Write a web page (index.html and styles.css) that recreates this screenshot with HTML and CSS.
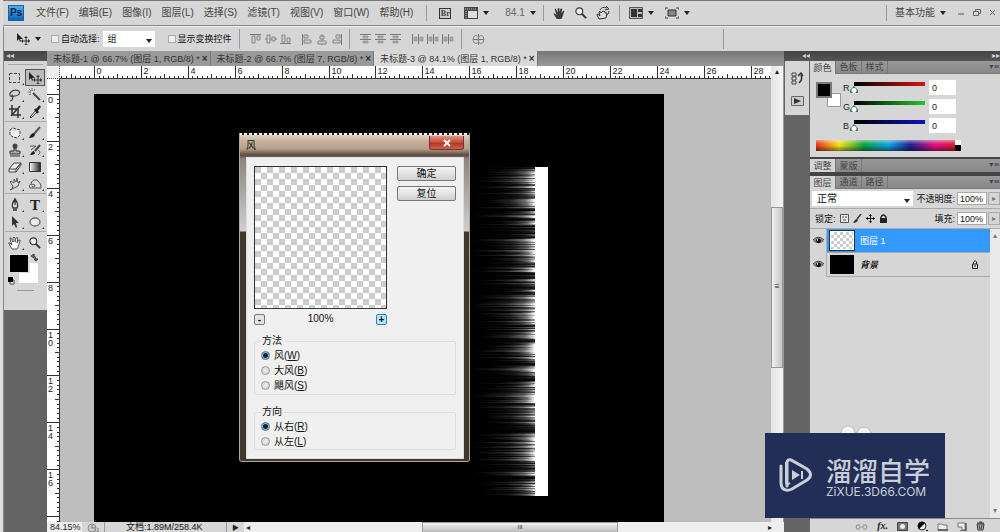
FILE: index.html
```html
<!DOCTYPE html>
<html lang="zh-CN">
<head>
<meta charset="utf-8">
<title>未标题-3</title>
<link rel="stylesheet" href="styles.css">
</head>
<body>
<svg class="defs" width="0" height="0" aria-hidden="true">
  <defs>
    <linearGradient id="fade"><stop offset="0" stop-color="#fff" stop-opacity="0"/><stop offset=".5" stop-color="#fff" stop-opacity=".14"/><stop offset=".8" stop-color="#fff" stop-opacity=".45"/><stop offset="1" stop-color="#fff" stop-opacity="1"/></linearGradient>
    <linearGradient id="grad"><stop offset="0" stop-color="#fff"/><stop offset="1" stop-color="#222"/></linearGradient>
    <symbol id="move" viewBox="0 0 14 12"><path d="M1 0v8l2-2 1 3 1-1-1-2h3z" fill="#222"/><path d="M10 4v8M6 8h8" stroke="#333" stroke-width="1"/><path d="M10 3l-2 2h4zM10 12l-2-1h4zM5 8l2-2v4zM14 8l-2-2v4z" fill="#333"/></symbol>
    <symbol id="hand" viewBox="0 0 14 14"><path d="M4 13L1 8q-1-2 1-1l2 2L2 3q0-2 1-1l2 4V2q1-2 2 0v4l1-4q1-1 2 0L9 7l2-3q2 0 1 1l-2 6-1 2z"/></symbol>
    <symbol id="lens" viewBox="0 0 14 14"><circle cx="5" cy="5" r="4" fill="#eee" stroke="#333" stroke-width="1.3"/><path d="M8 8l5 5" stroke="#333" stroke-width="2.2"/></symbol>
    <symbol id="eye" viewBox="0 0 12 9"><path d="M0 5Q6-1 12 5 6 10 0 5" fill="#777"/><path d="M0 4Q6-2 12 4" fill="none" stroke="#222"/><circle cx="6" cy="5" r="2.6" fill="#111"/><circle cx="5" cy="4" r=".8" fill="#fff"/></symbol>
    <symbol id="lock" viewBox="0 0 9 10"><path d="M2 5V3q2-4 5 0v2" fill="none" stroke="#222" stroke-width="1.3"/><path d="M1 4h7v5H1z" fill="#222"/></symbol>
    <symbol id="dist" viewBox="0 0 12 10"><path d="M0 .5h11M0 5.500h11" stroke="#777"/><path d="M3 2h5v2H3zM3 7h5v2H3z" fill="#aaa" stroke="#888" stroke-width=".6"/></symbol>
    <symbol id="disth" viewBox="0 0 12 10"><path d="M.5 0v10M6.500 0v10" stroke="#777"/><path d="M2 3h3v4H2zM8 3h3v4H8z" fill="#aaa" stroke="#888" stroke-width=".6"/></symbol>
  </defs>
</svg>
<div class="app">
  <header class="menubar">
    <span class="logo">Ps</span>
    <nav class="menus">
      <button>文件(F)</button><button>编辑(E)</button><button>图像(I)</button><button>图层(L)</button><button>选择(S)</button><button>滤镜(T)</button><button>视图(V)</button><button>窗口(W)</button><button>帮助(H)</button>
    </nav>
    <i class="sep"></i>
    <div class="quick">
      <button class="bridge">Br</button>
      <button class="drop" aria-label="查看额外内容"><svg width="14" height="12"><path d="M0 0h14v12H0z" fill="#444"/><path d="M4 4h9v7H4z" fill="#ddd"/><path d="M1 2h12M2 4v7" stroke="#ccc" stroke-dasharray="1 1"/></svg></button>
      <button class="drop zoomlevel">84.1</button>
    </div>
    <i class="sep"></i>
    <div class="views">
      <button aria-label="抓手"><svg width="13" height="13" fill="#3a3a3a"><use href="#hand"/></svg></button>
      <button aria-label="缩放"><svg width="12" height="12"><use href="#lens"/></svg></button>
      <button aria-label="旋转视图"><svg width="14" height="14"><path d="M3 13l-2-4q0-2 2 0l1 1-1-4q1-2 2 1l2-2q2 0 2 2l2 0-1 5z" fill="#ddd" stroke="#333"/><path d="M4 4Q6 0 11 2M10 0l3 3-4 1M13 5q0 3-2 4" fill="none" stroke="#333"/></svg></button>
    </div>
    <i class="sep"></i>
    <div class="views screens">
      <button class="drop" aria-label="排列文档"><svg width="14" height="12"><path d="M.5.5h13v11H.5z" fill="#bbb" stroke="#555"/><path d="M2 2h6v8H2zM9 2h4v3H9zM9 7h4v3H9z" fill="#333"/></svg></button>
      <button class="drop" aria-label="屏幕模式"><svg width="14" height="12"><path d="M3 3h8v6H3z" fill="#888" stroke="#333"/><path d="M0 3V1h3M11 1h3v2M0 9v2h3M11 11h3V9" fill="none" stroke="#444"/></svg></button>
    </div>
    <div class="right">
      <i class="sep"></i>
      <button class="drop workspace">基本功能</button>
      <button aria-label="最小化"><svg width="8" height="8"><path d="M1 5h6" stroke="#555"/></svg></button>
      <button aria-label="还原"><svg width="8" height="8"><path d="M2.500 2V.5h5v4H6M.5 2.500h5v4h-5z" fill="none" stroke="#666"/></svg></button>
      <button aria-label="关闭"><svg width="8" height="8"><path d="M1 1l5 5M6 1L1 6" stroke="#666"/></svg></button>
    </div>
  </header>

  <div class="options">
    <button class="drop current" aria-label="移动工具"><svg width="14" height="12"><use href="#move"/></svg></button>
    <label class="check"><input type="checkbox">自动选择:</label>
    <span class="picker group"><select aria-label="自动选择"><option>组</option></select></span>
    <label class="check"><input type="checkbox">显示变换控件</label>
    <i class="sep"></i>
    <div class="align">
      <svg width="12" height="10"><path d="M0 .5h11" stroke="#777"/><path d="M2 2h3v7H2zM7 2h3v4H7z" fill="#ccc" stroke="#888"/></svg>
      <svg width="12" height="10"><path d="M0 5h12" stroke="#777"/><path d="M2 1h3v8H2zM7 3h3v4H7z" fill="#ccc" stroke="#888"/></svg>
      <svg width="12" height="10"><path d="M0 9.500h11" stroke="#777"/><path d="M2 1h3v7H2zM7 4h3v4H7z" fill="#ccc" stroke="#888"/></svg>
    </div>
    <div class="align second">
      <svg width="10" height="11"><path d="M.5 0v11" stroke="#777"/><path d="M2 1h4v3H2zM2 6h7v3H2z" fill="#ccc" stroke="#888"/></svg>
      <svg width="10" height="11"><path d="M5 0v11" stroke="#777"/><path d="M3 2h4v3H3zM1 7h8v3H1z" fill="#ccc" stroke="#888"/></svg>
      <svg width="10" height="11"><path d="M9.500 0v11" stroke="#777"/><path d="M4 1h4v3H4zM1 6h7v3H1z" fill="#ccc" stroke="#888"/></svg>
    </div>
    <i class="sep"></i>
    <div class="align"><svg width="12" height="10"><use href="#dist"/></svg><svg width="12" height="10"><use href="#dist"/></svg><svg width="12" height="10"><use href="#dist"/></svg></div>
    <div class="align"><svg width="12" height="10"><use href="#disth"/></svg><svg width="12" height="10"><use href="#disth"/></svg><svg width="12" height="10"><use href="#disth"/></svg></div>
    <i class="sep"></i>
    <div class="align"><svg width="13" height="11"><path d="M6.500 0v11M1 5.500h11" stroke="#777"/><ellipse cx="4" cy="5.500" rx="3" ry="4" fill="none" stroke="#888"/><ellipse cx="9" cy="5.500" rx="3" ry="4" fill="none" stroke="#888"/></svg></div>
    <i class="sep last"></i>
  </div>

  <main class="work">
    <aside class="tools">
      <div class="darkbar start">◂◂</div>
      <div class="toolbody">
        <div class="grip"></div>
        <div class="toolset">
          <button aria-label="矩形选框"><svg width="14" height="14"><path d="M1.500 2.500h10v9h-10z" fill="none" stroke="#444" stroke-dasharray="3 1.500"/></svg></button>
          <button class="active" aria-label="移动"><svg width="14" height="12"><use href="#move"/></svg></button>
          <button aria-label="套索"><svg width="14" height="14"><path d="M4 9Q0 7 3 4t8-1q2 4-4 5-4 1-3-1 2 0 0 5l-2 1" fill="none" stroke="#444" stroke-width="1.200"/></svg></button>
          <button aria-label="魔棒"><svg width="14" height="14"><path d="M5 5l7 7" stroke="#444" stroke-width="2"/><path d="M4 0v3M0 4h3M1 1l2 2M7 1L6 3M1 7l2-1" stroke="#777"/></svg></button>
          <button aria-label="裁剪"><svg width="14" height="14"><path d="M4 0v10h9M1 4h9v9M3 11L12 1" fill="none" stroke="#333" stroke-width="1.500"/></svg></button>
          <button aria-label="吸管"><svg width="14" height="14"><path d="M2 12l6-7 1 2-6 6z" fill="#ddd" stroke="#444"/><path d="M7 4l3 4M9 5l3-4" stroke="#222" stroke-width="2.500"/></svg></button>
        </div>
        <div class="toolset">
          <button aria-label="修复画笔"><svg width="14" height="14"><path d="M2 4l3-2 3 1 4 1v5l-3 3-4-1-3-2z" fill="#eee" stroke="#444" stroke-dasharray="3 1"/></svg></button>
          <button aria-label="画笔"><svg width="14" height="14"><path d="M12 1L6 8" stroke="#555" stroke-width="2"/><path d="M1 12q2-5 5-5l1 2q-1 3-6 3" fill="#222"/></svg></button>
          <button aria-label="仿制图章"><svg width="14" height="14"><circle cx="7" cy="3" r="2.500" fill="#444"/><path d="M6 5h2v3h4v3H2V8h4zM2 13h10" fill="#aaa" stroke="#333"/></svg></button>
          <button aria-label="历史记录画笔"><svg width="14" height="14"><path d="M12 2L7 8" stroke="#444" stroke-width="2"/><path d="M2 12q2-4 4-4l1 2q-1 2-5 2" fill="#222"/><path d="M2 3h6L3 7M10 7q4 2 0 5" fill="none" stroke="#555"/></svg></button>
          <button aria-label="橡皮擦"><svg width="14" height="14"><path d="M1 9l5-6h7l-5 6zM1 9v3h7V9l5-6v2l-5 7" fill="#eee" stroke="#444"/></svg></button>
          <button aria-label="渐变"><svg width="14" height="14"><path d="M1.500 2.500h11v9h-11z" fill="url(#grad)" stroke="#333"/></svg></button>
          <button aria-label="涂抹"><svg width="14" height="14"><path d="M2 13q3-1 3-4L2 5l1-1 3 2V2l2 3 1-4 1 5 2-2-2 5-4 2z" fill="#ddd" stroke="#555"/></svg></button>
          <button aria-label="海绵"><svg width="14" height="14"><path d="M2 11Q0 8 3 7q1-5 6-4 5 4 4 8z" fill="#ddd" stroke="#555"/><path d="M3 8q4-2 4 1-2 2-3 0" fill="none" stroke="#555"/></svg></button>
        </div>
        <div class="toolset">
          <button aria-label="钢笔"><svg width="14" height="14"><path d="M7 1q4 5 2 9H5Q3 6 7 1v6M5 12h4" fill="#ddd" stroke="#333" stroke-width="1.300"/></svg></button>
          <button class="type" aria-label="文字">T</button>
          <button aria-label="路径选择"><svg width="14" height="14"><path d="M4 1v10l2-2 2 4 1-1-1-4h3z" fill="#333"/></svg></button>
          <button aria-label="椭圆"><svg width="14" height="14"><ellipse cx="7" cy="7" rx="5" ry="4" fill="#eee" stroke="#666" stroke-width="1.300"/></svg></button>
        </div>
        <div class="toolset">
          <button aria-label="抓手工具"><svg width="14" height="14" fill="#fff" stroke="#555"><use href="#hand"/></svg></button>
          <button class="plain" aria-label="缩放工具"><svg width="12" height="12"><use href="#lens"/></svg></button>
        </div>
        <svg class="swatches" width="38" height="34"><path d="M16 11h19v20H16z" fill="#fff"/><path d="M6 2h21v19H6z" fill="#ddd"/><path d="M7 3h18v17H7z"/><path d="M29 4q4-1 4 4M28 4l3-2v4zM33 9l-2-2h4z" fill="none" stroke="#333"/><path d="M7 28h4v4H7z" fill="#fff" stroke="#444"/><path d="M5 25h5v5H5z"/></svg>
        <i class="mask"></i>
      </div>
    </aside>

    <section class="document">
      <div class="tabs">
        <button>未标题-1 @ 66.7% (图层 1, RGB/8) *<b>×</b></button>
        <button>未标题-2 @ 66.7% (图层 7, RGB/8) *<b>×</b></button>
        <button class="on">未标题-3 @ 84.1% (图层 1, RGB/8) *<b>×</b></button>
      </div>
      <div class="viewport">
        <div class="corner"></div>
        <div class="ruler" id="ruler-x"></div>
        <div class="vscroll"><span>▴</span><div class="vthumb">≡</div></div>
        <div class="ruler" id="ruler-y"></div>
        <div class="board">
          <div class="art"><svg id="wind" width="80" height="329"></svg></div>
        </div>
      </div>
      <footer class="status">
        <input value="84.15%" aria-label="缩放比例">
        <svg width="12" height="10"><circle cx="5" cy="5" r="4" fill="#ccc" stroke="#888"/><path d="M5 2v3h3M7 9h4V5" fill="none" stroke="#777"/></svg>
        <span class="info">文档:1.89M/258.4K</span>
        <button aria-label="状态菜单">▶</button>
        <div class="hscroll"><span>◂</span><div class="hthumb">III</div><span>▸</span></div>
      </footer>
    </section>

    <aside class="dock">
      <div class="darkbar end">◂◂</div>
      <div class="dockbody">
        <button aria-label="历史记录"><svg width="13" height="13"><path d="M1 1h4v3H1zM1 5h4v3H1zM1 9h4v3H1z" fill="#ddd" stroke="#444"/><path d="M8 11q4-3 2-8M7 4l3-3 2 3" fill="none" stroke="#333" stroke-width="1.500"/></svg></button>
        <button aria-label="动作"><svg width="13" height="10"><path d="M.5.5h12v9H.5z" fill="#ccc" stroke="#666"/><path d="M3 2l7 3-7 3z" fill="#333"/></svg></button>
      </div>
    </aside>

    <aside class="panels">
      <div class="darkbar end">▸▸</div>
      <div class="ptabs"><button class="on">颜色</button><button>色板</button><button>样式</button><i>▾≡</i></div>
      <div class="color">
        <svg class="fgbg" width="26" height="26"><path d="M11.500 11.500h13v13h-13z" fill="#fff" stroke="#999"/><path d="M1 1h14v14H1z" stroke="#777" stroke-width="2"/></svg>
        <div class="channels">
          <label for="r">R</label><input type="range" id="r" class="red" min="0" max="255" value="0"><input class="num" value="0" aria-label="R 值">
          <label for="g">G</label><input type="range" id="g" class="green" min="0" max="255" value="0"><input class="num" value="0" aria-label="G 值">
          <label for="b">B</label><input type="range" id="b" class="blue" min="0" max="255" value="0"><input class="num" value="0" aria-label="B 值">
        </div>
        <div class="spectrum"><i></i></div>
      </div>
      <div class="ptabs adjust"><button class="on">调整</button><button>蒙版</button><i>▾≡</i></div>
      <div class="ptabs"><button class="on">图层</button><button>通道</button><button>路径</button><i>▾≡</i></div>
      <div class="row blend">
        <span class="picker mode"><select aria-label="混合模式"><option>正常</option></select></span>
        <label for="op">不透明度:</label><input class="pct" id="op" value="100%"><button class="step" aria-label="不透明度滑块">▸</button>
      </div>
      <div class="row locks">
        <span>锁定:</span>
        <button aria-label="锁定透明像素"><svg width="9" height="9"><path d="M.5.5h8v8h-8z" fill="#eee" stroke="#555"/><path d="M2 2h2v2H2zM5 2h2v2H5zM3 5h3v2H3z" fill="#999"/></svg></button>
        <button aria-label="锁定图像像素"><svg width="9" height="9"><path d="M8 0L4 5" stroke="#333" stroke-width="1.500"/><path d="M0 9q2-4 4-4l1 1q-1 3-5 3" fill="#333"/></svg></button>
        <button aria-label="锁定位置"><svg width="9" height="9"><path d="M4.500 0v9M0 4.500h9" stroke="#222"/><path d="M4.500 0L3 2h3zM4.500 9L3 7h3zM0 4.500L2 3v3zM9 4.500L7 3v3z"/></svg></button>
        <button aria-label="锁定全部"><svg width="9" height="10"><use href="#lock"/></svg></button>
        <label for="fill">填充:</label><input class="pct" id="fill" value="100%"><button class="step" aria-label="填充滑块">▸</button>
      </div>
      <div class="layerarea">
        <div class="layers">
          <div class="layer sel"><button class="vis" aria-label="图层 1 可见"><svg width="11" height="9"><use href="#eye"/></svg></button><span class="thumb checker"></span><span class="name">图层 1</span></div>
          <div class="layer"><button class="vis" aria-label="背景可见"><svg width="11" height="9"><use href="#eye"/></svg></button><span class="thumb black"></span><span class="name slant">背景</span><svg width="8" height="9"><path d="M1.500 4v4.500h5V4zM2.500 4V2q2-3 3 0v2M4 5v2" fill="none" stroke="#222"/></svg></div>
        </div>
        <div class="lscroll"><span>▴</span><span>▾</span></div>
      </div>
      <footer class="actions">
        <button aria-label="链接图层"><svg width="13" height="9"><path d="M5 3H2L1 5l1 2h3M8 3h3l1 2-1 2H8M4 5h5" fill="none" stroke="#888"/></svg></button>
        <button class="fx">fx.</button>
        <button aria-label="蒙版"><svg width="11" height="9"><path d="M.5.5h10v8H.5z" fill="#777" stroke="#444"/><circle cx="5.500" cy="4.500" r="2.500" fill="#eee"/></svg></button>
        <button aria-label="调整图层"><svg width="11" height="10"><circle cx="5" cy="5" r="4" fill="#eee" stroke="#222"/><path d="M2 8A4 4 0 018 2zM9 9h2v1H9z"/></svg></button>
        <button aria-label="新建组"><svg width="11" height="9"><path d="M1 2h4l1 1h4v5H1z" fill="#eee" stroke="#777"/><path d="M1 8h10" stroke="#222"/></svg></button>
        <button aria-label="新建图层"><svg width="10" height="9"><path d="M1 1h7v7H5V5H1z" fill="#eee" stroke="#777"/><path d="M9 1v8H3" fill="none" stroke="#222"/></svg></button>
        <button aria-label="删除图层"><svg width="9" height="10"><path d="M1 3h7L7 9H2zM1 2h7M3 1h3M3 4l1 4M6 4L5 8" fill="#bbb" stroke="#333"/></svg></button>
      </footer>
    </aside>
  </main>
</div>

<div class="dialog" role="dialog" aria-labelledby="dlg">
  <div class="titlebar"><span id="dlg">风</span><button aria-label="关闭对话框"><svg width="10" height="8"><path d="M2 1l6 6M8 1L2 7" stroke="#fff" stroke-width="2"/></svg></button></div>
  <div class="dbody">
    <div class="dtop">
      <div class="preview">
        <div class="checks"></div>
        <div class="zoombar"><button>-</button><span>100%</span><button class="plus">+</button></div>
      </div>
      <div class="dbuttons"><button>确定</button><button>复位</button></div>
    </div>
    <fieldset><legend>方法</legend>
      <label><input type="radio" name="m" checked>风(<u>W</u>)</label>
      <label><input type="radio" name="m">大风(<u>B</u>)</label>
      <label><input type="radio" name="m">飓风(<u>S</u>)</label>
    </fieldset>
    <fieldset><legend>方向</legend>
      <label><input type="radio" name="d" checked>从右(<u>R</u>)</label>
      <label><input type="radio" name="d">从左(<u>L</u>)</label>
    </fieldset>
  </div>
</div>

<div class="brand">
  <svg class="bumps" width="36" height="10"><circle cx="9" cy="9" r="7" fill="#f4f4f4" stroke="#bbb"/><circle cx="25" cy="10" r="7" fill="#f4f4f4" stroke="#bbb"/></svg>
  <svg width="36" height="38" viewBox="0 0 36 38"><path d="M9 29V6q0-4 4-3l16 9q7 6 0 11L14 32q-4 2-6 1-5-1-5-7V9" fill="none" stroke="#c9cedb" stroke-width="3" stroke-linecap="round"/><path d="M8 5v20q0 4 4 1" fill="none" stroke="#c9cedb" stroke-width="2"/><path d="M14 13l8 5-8 5zM23 14h2v8h-2z" fill="#c9cedb"/></svg>
  <div><strong>溜溜自学</strong><span>ZiXUE.3D66.COM</span></div>
</div>
<script src="script.js"></script>
</body>
</html>
```
FILE: styles.css
```css
* { box-sizing: border-box; }
body {
  margin: 0;
  position: relative;
  overflow: hidden;
  background: #646464;
  color: #222;
  font: 10px/14px "Liberation Sans", "Noto Sans CJK SC", sans-serif;
}
button, input, select { font: inherit; color: inherit; margin: 0; padding: 0; border: 0; border-radius: 0; }
button { background: none; white-space: nowrap; display: flex; align-items: center; justify-content: center; }
svg { flex: none; display: block; }
.defs { position: absolute; }
.app { min-height: 100vh; display: flex; flex-direction: column; border-left: 3px solid #ddd; }

.menubar { display: flex; align-items: center; height: 26px; background: #d6d6d6; border-top: 1px solid #777; border-bottom: 1px solid #888; color: #444; }
.logo { width: 16px; height: 16px; margin: 0 12px 0 5px; background: linear-gradient(#48b0f4, #0e63b8); border: 1px solid #1665a8; color: #06213f; font: bold 10px/14px "Liberation Sans", sans-serif; text-align: center; }
.menus { display: flex; gap: 10px; }
.sep { width: 1px; height: 16px; background: #999; }
.menus + .sep { margin: 0 12px 0 13px; }
.quick { display: flex; align-items: center; gap: 13px; margin-right: 7px; }
.bridge { width: 12px; height: 11px; border: 1px solid #333; background: #ccc; font: bold 8px/9px "Liberation Serif", serif; }
.drop::after { content: ""; border: 3px solid transparent; border-top: 4px solid #222; border-bottom: 0; margin-left: 5px; }
.zoomlevel { color: #666; padding-left: 3px; }
.views { display: flex; align-items: center; gap: 9px; margin: 0 9px; }
.screens { gap: 11px; }
.right { margin-left: auto; display: flex; align-items: center; gap: 8px; padding-right: 3px; }
.workspace { margin-right: 3px; }

.options { display: flex; align-items: center; height: 25px; background: #d6d6d6; border-top: 1px solid #eee; padding-left: 12px; border-left: 1px solid #888; font-size: 9px; color: #111; }
.options .sep { height: 20px; }
.current { margin-right: 10px; }
.check { display: flex; align-items: center; gap: 2px; white-space: nowrap; }
.check input { appearance: none; width: 8px; height: 8px; background: #eee; border: 1px solid #aaa; }
.picker { position: relative; display: block; }
.picker select { appearance: none; width: 100%; height: 100%; background: #fff; padding-left: 5px; }
.picker::after { content: ""; position: absolute; right: 3px; top: 50%; border: 3px solid transparent; border-top: 4px solid #222; border-bottom: 0; pointer-events: none; }
.group { width: 52px; height: 16px; margin: 0 13px 0 3px; }
.check + .sep { margin-left: 7px; }
.align { display: flex; align-items: center; gap: 3px; margin-left: 10px; }
.second { gap: 5px; }
.align + .sep { margin-left: 7px; }
.options .last { margin-left: 238px; }

.work { flex: 1; display: grid; grid-template-columns: 44px minmax(0, 1fr) 26px 190px; }
.darkbar { height: 10px; background: linear-gradient(#444, #555); color: #ccc; font-size: 8px; line-height: 9px; }
.start { padding-left: 2px; }
.end { text-align: right; }
.tools { border-left: 1px solid #888; }
.toolbody { background: #d6d6d6; padding: 3px 1px 18px; height: 249px; display: flex; flex-direction: column; }
.grip { height: 1px; margin: 0 3px 4px; background: #aaa; }
.toolset { display: grid; grid-template-columns: 20px 20px; grid-auto-rows: 17px; border-bottom: 1px solid #aaa; padding-bottom: 1px; margin-bottom: 2px; }
.toolset button { position: relative; }
.toolset button::after { content: ""; position: absolute; right: 1px; bottom: 1px; border: 1px solid #333; border-left-color: transparent; border-top-color: transparent; }
.toolset .active { background: #bbb; border: 1px solid #555; }
.toolset .active::after, .toolset .plain::after { display: none; }
.toolset:nth-of-type(5) { border: 0; margin: 0; }
.type { font: bold 15px/16px "Liberation Serif", serif; }
.swatches { margin-left: -2px; }
.mask { width: 17px; height: 1px; background: #999; margin: 4px auto 0; }

.document { display: flex; flex-direction: column; min-width: 0; }
.tabs { display: flex; height: 15px; background: linear-gradient(#777, #999); }
.tabs button { background: #999; border-right: 1px solid #777; color: #333; padding: 0 2px 0 6px; font-size: 9px; }
.tabs b { margin-left: 2px; font-size: 10px; color: #333; }
.tabs .on { background: #d9d9d9; }
.viewport { flex: 1; display: grid; grid-template: 13px minmax(0, 1fr) / 13px minmax(0, 1fr) 13px; }
.corner { background: #eee; border-right: 1px dotted #555; border-bottom: 1px dotted #555; }
.ruler { background: #fff; overflow: hidden; min-width: 0; }
.ruler text { font: 9px "Liberation Sans", sans-serif; fill: #222; }
.ruler path { stroke: #333; fill: none; }
.vscroll { grid-row: 1 / 3; grid-column: 3; background: linear-gradient(90deg, #e4e4e4, #f4f4f4); border-right: 1px solid #999; display: flex; flex-direction: column; align-items: center; font-size: 8px; line-height: 11px; }
.vthumb { width: 100%; height: 161px; margin-top: 130px; background: linear-gradient(90deg, #f0f0f0, #c4c4c4); border: 1px solid #999; text-align: center; line-height: 158px; }
#ruler-y { grid-row: 2; }
.board { background: #bebebe; padding: 15px 107px 0 34px; display: flex; min-width: 0; }
.art { flex: 1; background: #000; position: relative; }
#wind { position: absolute; left: 375px; top: 73px; }

.status { display: flex; align-items: center; height: 11px; background: #d6d6d6; line-height: 11px; gap: 5px; }
.status input { width: 35px; height: 11px; background: #eee; padding-left: 3px; font-size: 9px; }
.info { width: 123px; padding-left: 21px; border-left: 1px solid #999; border-right: 1px solid #999; font-size: 9px; white-space: nowrap; color: #111; }
.status button { font-size: 7px; }
.hscroll { flex: 1; display: flex; height: 11px; background: #eee; padding: 0 12px 0 2px; font-size: 8px; }
.hthumb { width: 196px; margin: 0 150px 0 172px; border: 1px solid #999; background: linear-gradient(#f2f2f2, #bbb); text-align: center; font-size: 6px; line-height: 9px; }

.dockbody { background: #d6d6d6; height: 54px; margin: 0 1px; padding-top: 11px; display: flex; flex-direction: column; align-items: center; gap: 11px; }
.panels { background: #d6d6d6; display: flex; flex-direction: column; min-width: 0; }
.ptabs { display: flex; height: 13px; background: linear-gradient(#999, #888); border-bottom: 1px solid #777; color: #444; font-size: 9px; }
.ptabs button { width: 26px; border-right: 1px solid #777; }
.ptabs .on { background: #d6d6d6; height: 13px; }
.ptabs i { margin-left: auto; font: 8px/12px "DejaVu Sans", sans-serif; }
.color { display: grid; grid-template-columns: 26px 1fr; gap: 6px 0; padding: 6px 39px 5px 6px; border-bottom: 2px solid #444; height: 85px; }
.fgbg { margin-top: 2px; }
.channels { display: grid; grid-template-columns: 7px minmax(0, 1fr) 26px; grid-auto-rows: 15px; row-gap: 4px; align-items: center; margin: 0 6px 0 1px; font-size: 9px; }
.num { width: 27px; height: 15px; background: #fff; padding-left: 3px; }
.channels input[type=range] { appearance: none; background: none; width: 100%; height: 15px; padding-right: 4px; }
input[type=range]::-webkit-slider-runnable-track { height: 11px; background: linear-gradient(90deg, #000, var(--c)) 4px 0 / calc(100% - 4px) 4px no-repeat; }
input[type=range]::-webkit-slider-thumb { appearance: none; width: 8px; height: 7px; margin-top: 4px; background: radial-gradient(circle at 50% 65%, #fff 0 2px, #475 3px); clip-path: polygon(50% 0, 100% 60%, 100% 100%, 0 100%, 0 60%); }
.red { --c: #d01818; }
.green { --c: #22c832; }
.blue { --c: #1010c0; }
.spectrum { grid-column: 1 / 3; height: 11px; background: linear-gradient(rgba(255,255,255,.45), transparent 40%, transparent 50%, rgba(0,0,0,.5)), linear-gradient(90deg, #e03020, #f4e020 16%, #10a040 33%, #10a0e0 50%, #202090 65%, #e01080 82%, #d02020); position: relative; }
.spectrum i { position: absolute; right: 0; top: 0; width: 6px; height: 11px; background: linear-gradient(#fff 50%, #000 50%); }
.adjust { border-bottom: 4px solid #444; height: 17px; }
.row { display: flex; align-items: center; height: 20px; border-bottom: 1px solid #aaa; white-space: nowrap; padding-left: 2px; color: #111; }
.mode { flex: 1; height: 15px; }
.row label, .pct { font-size: 9px; }
.blend label { margin: 0 2px 0 3px; }
.pct { width: 30px; height: 13px; background: #fff; padding-left: 2px; border: 1px solid #aaa; }
.step { width: 12px; height: 13px; border: 1px solid #aaa; color: #777; font-size: 8px; margin-left: 1px; }
.locks { gap: 4px; padding-left: 5px; font-size: 9px; }
.locks label { margin-left: auto; }
.locks .pct { margin-right: -4px; margin-left: -2px; }
.layerarea { flex: 1; display: flex; border-bottom: 1px solid #888; }
.layers { flex: 1; }
.layer { height: 24px; display: flex; align-items: center; border-bottom: 1px solid #aaa; padding-right: 11px; }
.vis { width: 17px; height: 24px; border-right: 1px solid #aaa; background: #d6d6d6; }
.thumb { width: 24px; height: 19px; margin: 0 6px 0 3px; }
.checker { background: repeating-conic-gradient(#ccc 0 25%, #fff 0 50%) 0 0 / 6px 6px; outline: 1px solid #234; border: 1px solid #fff; }
.black { background: #000; }
.sel { background: #3399ff; color: #fff; }
.name { flex: 1; font-size: 9px; }
.slant { font-style: italic; font-weight: bold; }
.lscroll { width: 10px; background: #eaeaea; display: flex; flex-direction: column; justify-content: space-between; align-items: center; font-size: 8px; color: #777; }
.actions { height: 14px; display: flex; align-items: center; justify-content: flex-end; gap: 9px; padding-right: 15px; }
.fx { font: italic bold 10px/12px "Liberation Serif", serif; }

.dialog { position: absolute; left: 239px; top: 133px; width: 231px; padding: 2px 6px 3px 7px; color: #111;
  background: repeating-linear-gradient(90deg, #eee 0 3px, #222 3px 5px) 0 0 / 100% 2px no-repeat,
    linear-gradient(#e8dcd0, #c9b29c 8px, #b59e8b 16px, #5a4a40 22px, #8a8580 26px, #d0d0d0 98px, #40372d 99px, #40372d); box-shadow: inset 1px 0 #b5a78f, inset -1px 0 #b5a78f, inset 0 -1px #b5a78f; border-radius: 0 0 3px 3px; }
.titlebar { display: flex; justify-content: space-between; height: 22px; padding-top: 1px; }
.titlebar span { line-height: 19px; }
.titlebar button { width: 35px; height: 14px; background: linear-gradient(#dc9488, #c8483a 50%, #b03020 50%, #d06048); border: 1px solid #733; border-top: 0; border-radius: 0 0 3px 3px; }
.dbody { background: #f0f0f0; border: 1px solid #ddd; padding: 8px 7px; }
.dtop { display: flex; justify-content: space-between; margin-bottom: 5px; }
.preview { width: 133px; }
.checks { height: 143px; border: 1px solid #333; background: repeating-conic-gradient(#fff 0 25%, #ccc 0 50%) 0 0 / 12px 12px; }
.zoombar { display: flex; justify-content: space-between; align-items: center; height: 20px; }
.zoombar button { width: 11px; height: 11px; border: 1px solid #777; background: #e4e4e4; border-radius: 2px; line-height: 9px; font-weight: bold; }
.zoombar .plus { border-color: #2888b8; background: #b8e4f8; }
.dbuttons { display: flex; flex-direction: column; gap: 5px; }
.dbuttons button { width: 59px; height: 15px; border: 1px solid #777; border-radius: 2px; background: linear-gradient(#f4f4f4, #e4e4e4 50%, #cfcfcf); }
fieldset { border: 1px solid #ddd; border-radius: 2px; margin: 0 0 10px; padding: 0 6px 1px; }
fieldset:last-child { margin: 0; padding-bottom: 0; }
legend { padding: 0 1px; line-height: 14px; }
fieldset label { display: flex; align-items: center; height: 15px; }
fieldset input { appearance: none; width: 9px; height: 9px; border: 1px solid #999; border-radius: 50%; background: radial-gradient(#eee, #ccc); margin-right: 4px; }
fieldset input:checked { background: radial-gradient(#124 0 2px, #8bc 3px); border-color: #578; }

.brand { position: absolute; left: 765px; top: 433px; width: 180px; height: 85px; display: flex; align-items: center; gap: 12px; padding-left: 13px; background: #222e55; color: #c9cedb; }
.bumps { position: absolute; left: 74px; top: -9px; clip-path: inset(0 0 1px); }
.brand strong, .brand span { display: block; }
.brand strong { font: 500 26px/32px "Noto Sans CJK SC", sans-serif; }
.brand span { font: 12px/12px Inter, sans-serif; }
```
FILE: script.js
```js
const NS = "http://www.w3.org/2000/svg";
function add(parent, tag, attrs, text) {
  const el = document.createElementNS(NS, tag);
  for (const k in attrs) el.setAttribute(k, attrs[k]);
  if (text !== undefined) el.textContent = text;
  parent.appendChild(el);
  return el;
}

// Rulers: 47px for every two units, ten minor ticks between labels.
function ruler(id, origin, vertical, size) {
  const svg = add(document.getElementById(id), "svg", vertical ? { width: 13, height: size } : { width: size, height: 13 });
  let d = vertical ? `M12.5 0V${size}` : `M0 12.5H${size}`;
  for (let i = -10; i < 160; i++) {
    const p = Math.round(origin + i * 4.69) + 0.5;
    if (p < 0 || p > size) continue;
    const len = i % 10 === 0 ? 13 : i % 5 === 0 ? 5 : 3;
    d += vertical ? `M${13 - len} ${p}H13` : `M${p} ${13 - len}V13`;
    if (i % 10 === 0 && i >= 0) {
      const label = String(i / 5);
      if (vertical) {
        [...label].forEach((c, n) => {
          const y = p + 8 + n * 8;
          if (y < size) add(svg, "text", { x: 1, y }, c);
        });
      } else add(svg, "text", { x: p + 2, y: 8 }, label);
    }
  }
  add(svg, "path", { d });
}
ruler("ruler-x", 34, false, 711);
ruler("ruler-y", 15, true, 443);

// Wind streaks trailing left from the white bar.
const wind = document.getElementById("wind");
let seed = 7;
const rnd = () => (seed = (seed * 16807) % 2147483647) / 2147483647;
let strength = 0.5;
for (let y = 0; y < 329; y++) {
  strength = strength * 0.5 + rnd() * 0.5;
  const w = Math.round(26 + rnd() * 40);
  add(wind, "rect", { x: 66 - w, y, width: w, height: 1, fill: "url(#fade)", opacity: Math.min(1, strength * strength * 2).toFixed(2) });
}
add(wind, "rect", { x: 66, y: 0, width: 13, height: 329, fill: "#fff" });
```
